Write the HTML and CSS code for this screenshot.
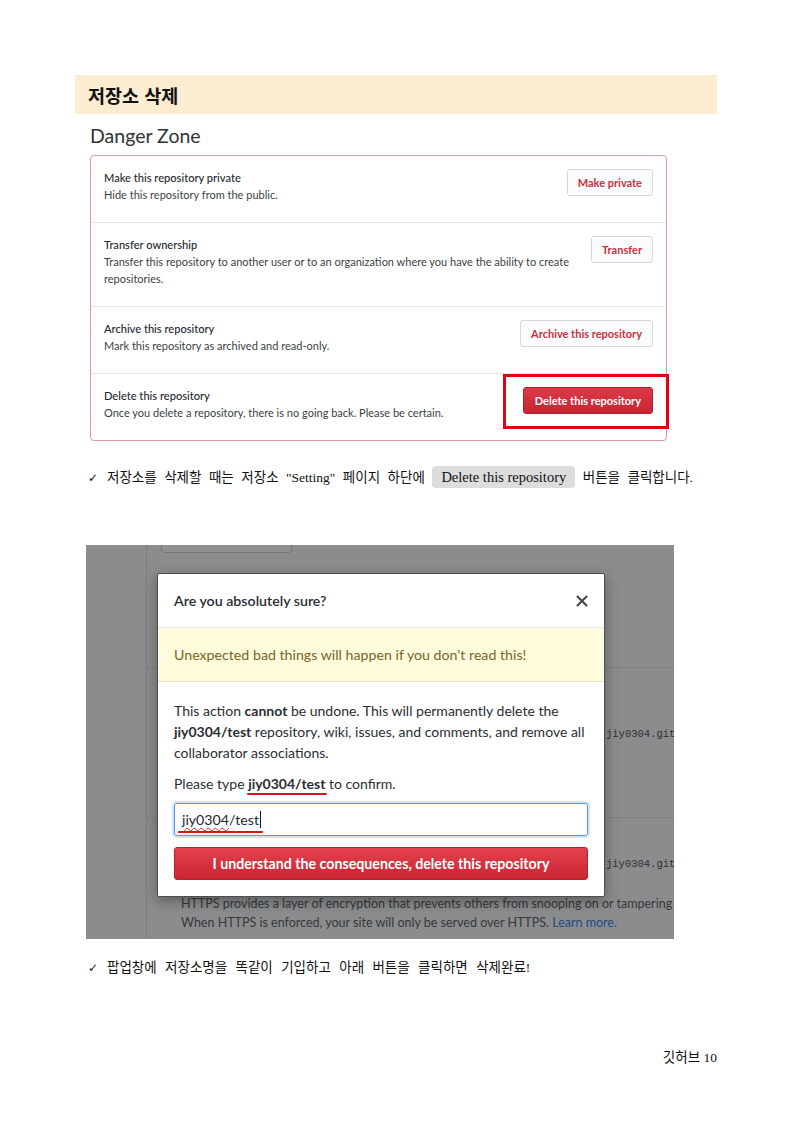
FILE: index.html
```html
<!DOCTYPE html>
<html lang="ko">
<head>
<meta charset="utf-8">
<title>저장소 삭제</title>
<link rel="stylesheet" href="styles.css">
</head>
<body>
<div class="page">
  <div class="sec-head">저장소 삭제</div>

  <div class="danger">
    <h2 class="dz-title">Danger Zone</h2>
    <div class="dz-box">
      <div class="dz-row">
        <div class="dz-text">
          <div class="dz-name">Make this repository private</div>
          <div class="dz-desc">Hide this repository from the public.</div>
        </div>
        <span class="dz-btn">Make private</span>
      </div>
      <div class="dz-row">
        <div class="dz-text">
          <div class="dz-name">Transfer ownership</div>
          <div class="dz-desc">Transfer this repository to another user or to an organization where you have the ability to create repositories.</div>
        </div>
        <span class="dz-btn">Transfer</span>
      </div>
      <div class="dz-row">
        <div class="dz-text">
          <div class="dz-name">Archive this repository</div>
          <div class="dz-desc">Mark this repository as archived and read-only.</div>
        </div>
        <span class="dz-btn">Archive this repository</span>
      </div>
      <div class="dz-row dz-last">
        <div class="dz-text">
          <div class="dz-name">Delete this repository</div>
          <div class="dz-desc">Once you delete a repository, there is no going back. Please be certain.</div>
        </div>
        <span class="dz-btn dz-btn-danger">Delete this repository</span>
        <span class="highlight"></span>
      </div>
    </div>
  </div>

  <p class="note note-just"><span class="check">✓</span>저장소를 삭제할 때는 저장소 "Setting" 페이지 하단에 <span class="kbd">Delete this repository</span> 버튼을 클릭합니다.</p>

  <div class="shot">
    <div class="bg-side"></div>
    <div class="bg-main">
      <div class="stub"></div>
      <div class="bg-sec1"></div>
      <div class="bg-sec2"><span class="mono">jiy0304.github.io/test</span></div>
      <div class="bg-sec3">
        <div class="mono mono-2">jiy0304.github.io)</div>
        <div class="https https-first">HTTPS provides a layer of encryption that prevents others from snooping on or tampering with traffic to your site.</div>
        <div class="https">When HTTPS is enforced, your site will only be served over HTTPS. <span class="bg-link">Learn more.</span></div>
      </div>
    </div>

    <div class="modal">
      <div class="m-head">
        <span class="m-title">Are you absolutely sure?</span>
        <svg class="m-close" width="12" height="12" viewBox="0 0 12 12"><path d="M1.5 1.5 L10.5 10.5 M10.5 1.5 L1.5 10.5" stroke="#3f4449" stroke-width="2" stroke-linecap="round"/></svg>
      </div>
      <div class="m-flash">Unexpected bad things will happen if you don’t read this!</div>
      <div class="m-body">
        <p>This action <b>cannot</b> be undone. This will permanently delete the <b>jiy0304/test</b> repository, wiki, issues, and comments, and remove all collaborator associations.</p>
        <p class="m-type">Please type <b class="mark">jiy0304/test</b> to confirm.</p>
        <div class="m-input"><span class="mark mark-in"><span class="squiggle">jiy0304</span>/test</span><span class="caret"></span></div>
        <div class="m-btn">I understand the consequences, delete this repository</div>
      </div>
    </div>
  </div>

  <p class="note note-2"><span class="check">✓</span>팝업창에 저장소명을 똑같이 기입하고 아래 버튼을 클릭하면 삭제완료!</p>

  <div class="footer">깃허브 10</div>
</div>
</body>
</html>
```
FILE: styles.css
```css
* { box-sizing: border-box; }

body {
  margin: 0;
  background: #fff;
  color: #111;
  font-family: "Liberation Serif", "Noto Sans CJK KR", serif;
}

.page {
  width: 642px;
  margin-left: 75px;
  padding-top: 75px;
}

.sec-head {
  height: 39px;
  background: #fbecd2;
  padding-left: 13px;
  display: flex;
  align-items: center;
  font-family: "Noto Sans CJK KR", sans-serif;
  font-weight: 700;
  font-size: 18.5px;
  color: #111;
}

/* ---------- Danger zone screenshot ---------- */
.danger {
  margin-left: 15px;
  width: 577px;
  font-family: Lato, "Open Sans", sans-serif;
  color: #24292e;
}

.dz-title {
  margin: 10px 0 7px;
  font-size: 19.5px;
  line-height: 24px;
  font-weight: 400;
  color: #2f3337;
}

.dz-box {
  border: 1px solid #d99aa0;
  border-radius: 4px;
}

.dz-row {
  display: flex;
  align-items: flex-start;
  justify-content: space-between;
  gap: 10px;
  padding: 13px 13px 19px;
  border-top: 1px solid #e4e6e9;
}

.dz-row:first-child { border-top: none; }

.dz-text { flex: 1; }

.dz-name {
  font-size: 11.1px;
  line-height: 17px;
  font-weight: 500;
  color: #24292e;
}

.dz-desc {
  font-size: 11px;
  line-height: 17px;
  color: #3a3f44;
}

.dz-btn {
  flex: none;
  height: 27px;
  padding: 0 10px;
  border: 1px solid #d5d8dc;
  border-radius: 3px;
  background: #fafbfc;
  color: #c8323e;
  font-size: 11px;
  font-weight: 700;
  line-height: 25px;
}

.dz-btn-danger {
  padding: 0 11px;
  background: linear-gradient(#dc3b49, #c8232f);
  border-color: #b51f2b;
  color: #fff;
}

.dz-last { position: relative; }

.highlight {
  position: absolute;
  top: 0;
  right: -3px;
  width: 166px;
  height: 55px;
  border: 3px solid #e3000f;
}

/* ---------- Captions ---------- */
.note {
  margin: 25px 0 0 13px;
  font-size: 13.5px;
  line-height: 22px;
  word-spacing: 3px;
}

.note-just {
  width: 605px;
  text-align: justify;
  text-align-last: justify;
  word-spacing: 0;
}

.check {
  display: inline-block;
  width: 19px;
  font-family: "DejaVu Sans", sans-serif;
  font-size: 12px;
}

.kbd {
  display: inline-block;
  background: #dddddd;
  border-radius: 4px;
  padding: 0 9px;
  font-family: "Liberation Serif", serif;
  font-size: 14.5px;
  line-height: 22px;
  word-spacing: 0;
}

.note-2 { margin-top: 18px; word-spacing: 5px; }

.footer {
  margin-top: 68px;
  text-align: right;
  font-size: 13.5px;
  line-height: 22px;
}

/* ---------- Modal screenshot ---------- */
.shot {
  margin: 56px 0 0 11px;
  width: 588px;
  height: 394px;
  position: relative;
  overflow: hidden;
  display: flex;
  background: #8b8c8d;
  font-family: Lato, "Open Sans", sans-serif;
}

.bg-side {
  flex: none;
  width: 61px;
  border-right: 1px solid #7c7d7e;
}

.bg-main {
  flex: 1;
  min-width: 0;
  display: flex;
  flex-direction: column;
}

.stub {
  margin-left: 14px;
  width: 131px;
  height: 8px;
  border: 1px solid #76787a;
  border-top: none;
  border-radius: 0 0 4px 4px;
  background: #8f9091;
}

.bg-sec1 {
  height: 115px;
  border-bottom: 1px solid #808183;
}

.bg-sec2 {
  height: 150px;
  padding: 57px 0 0 459px;
  border-bottom: 1px solid #808183;
}

.bg-sec3 { padding-top: 37px; }

.mono {
  display: block;
  white-space: nowrap;
  font-family: "Liberation Mono", "DejaVu Sans Mono", monospace;
  font-size: 10.5px;
  line-height: 18px;
  color: #2e2f30;
}

.mono-2 { padding-left: 459px; }

.https {
  padding-left: 34px;
  white-space: nowrap;
  font-size: 12.5px;
  line-height: 19px;
  color: #35383b;
}

.https-first { margin-top: 21px; }

.bg-link { color: #1d4a86; }

.modal {
  position: absolute;
  left: 71px;
  top: 28px;
  width: 448px;
  background: #fff;
  border: 1px solid #4b4d50;
  border-radius: 2px;
  box-shadow: 0 4px 14px rgba(0, 0, 0, 0.35);
  color: #24292e;
}

.m-head {
  height: 54px;
  padding: 0 16px;
  display: flex;
  align-items: center;
  justify-content: space-between;
  border-bottom: 1px solid #e3e5e8;
}

.m-title {
  font-size: 14.2px;
  font-weight: 600;
  color: #2a2e33;
}

.m-close { display: block; }

.m-flash {
  height: 54px;
  padding: 0 16px;
  display: flex;
  align-items: center;
  background: #fffbdd;
  border-bottom: 1px solid #e8e3c0;
  color: #7a6625;
  font-size: 14.2px;
}

.m-body { padding: 18px 15px 16px 16px; }

.m-body p {
  margin: 0 0 10px;
  font-size: 14px;
  line-height: 21px;
  color: #2a2e33;
}

.m-body p.m-type { margin-bottom: 9px; }

.mark { position: relative; }

.mark::after {
  content: "";
  position: absolute;
  left: -1px;
  right: -2px;
  bottom: -3px;
  height: 2px;
  border-radius: 2px;
  background: #d7141d;
}

.mark-in::after { left: -4px; right: -4px; bottom: -5px; }

.squiggle {
  text-decoration: underline wavy #d4282f;
  text-decoration-thickness: 1px;
  text-underline-offset: 2px;
}

.m-input {
  height: 33px;
  margin-right: 1px;
  padding: 0 7px;
  display: flex;
  align-items: center;
  border: 1px solid #4d9be6;
  border-radius: 3px;
  box-shadow: 0 0 0 2px rgba(3, 102, 214, 0.18);
  font-size: 14.2px;
  color: #24292e;
}

.caret {
  display: inline-block;
  width: 1px;
  height: 17px;
  margin-left: 1px;
  background: #111;
}

.m-btn {
  margin-top: 11px;
  margin-right: 1px;
  height: 33px;
  display: flex;
  align-items: center;
  justify-content: center;
  border: 1px solid #b91f2c;
  border-radius: 3px;
  background: linear-gradient(#e2424f, #cb2431);
  color: #fff;
  font-size: 14.2px;
  font-weight: 700;
}
```
